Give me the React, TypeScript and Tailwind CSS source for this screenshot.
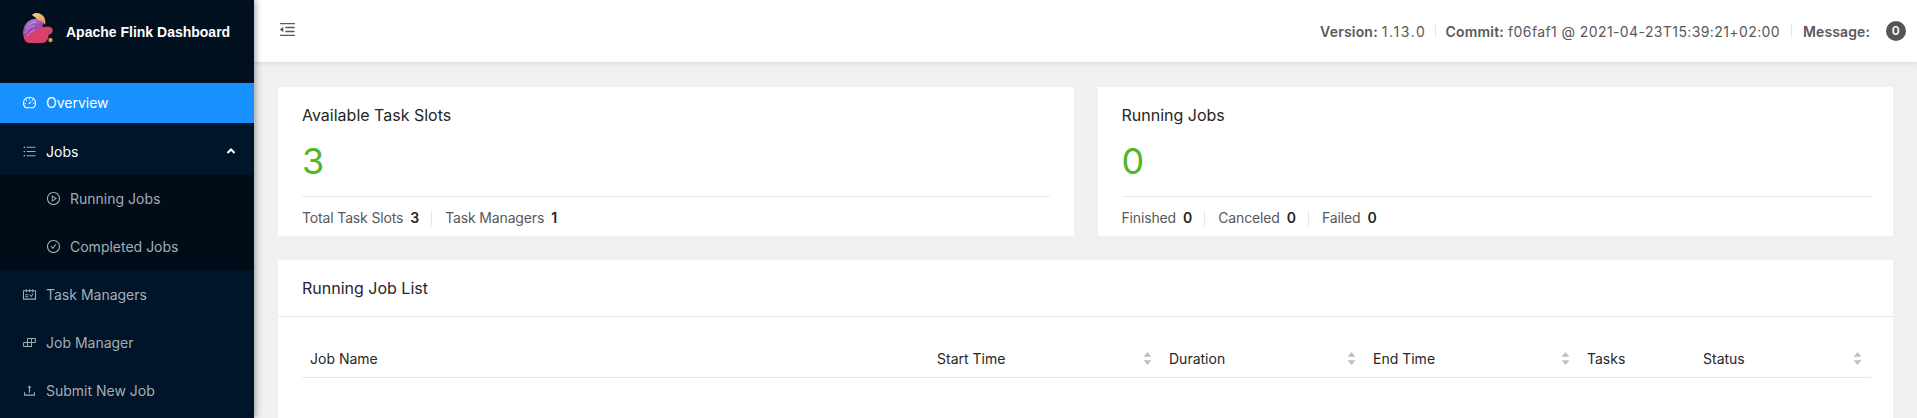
import {
  AiOutlineBuild,
  AiOutlineCheckCircle,
  AiOutlineDashboard,
  AiOutlineMenuFold,
  AiOutlinePlayCircle,
  AiOutlineSchedule,
  AiOutlineUnorderedList,
  AiOutlineUpload,
  AiFillCaretUp,
  AiFillCaretDown,
} from "react-icons/ai";

function Logo() {
  return (
    <svg width="32" height="32" viewBox="0 0 32 32" className="shrink-0">
      <defs>
        <linearGradient id="tail" x1="0" y1="0" x2="0.4" y2="1">
          <stop offset="0" stopColor="#c98ad8" />
          <stop offset="0.55" stopColor="#8f4fb8" />
          <stop offset="1" stopColor="#c9457f" />
        </linearGradient>
        <linearGradient id="crest" x1="0" y1="0" x2="1" y2="1">
          <stop offset="0" stopColor="#f9d98a" />
          <stop offset="1" stopColor="#e8874a" />
        </linearGradient>
      </defs>
      <path d="M1 22C1 14 5 8 12 7c4-1 8 0 10 3l-3 8-9 8c-3 1-8 1-9-4z" fill="url(#tail)" />
      <path d="M10 3c3-3 8-2 10 0 3 2 4 6 3 10-2-3-4-5-7-5-1-2-4-3-6-5z" fill="url(#crest)" />
      <path d="M4 17c2-4 6-7 10-7M3 21c2-4 6-7 10-7M5 24c2-3 5-5 8-6" stroke="#e2b4ee" strokeWidth="0.7" fill="none" />
      <path d="M1.500 24c4 0 8-1 12-5 3-3 6-5 9-4 2-1 7-1 8 2 1 3-1 5-4 6 0 4-2 8-6 8H7c-3 0-5-3-5.500-7z" fill="#d9416b" />
      <circle cx="28.500" cy="28" r="2.200" fill="#e39a2d" />
    </svg>
  );
}

function SortIcon() {
  return (
    <span className="flex flex-col text-[#bfbfbf] text-[11px] leading-none">
      <AiFillCaretUp className="-mb-[3px]" />
      <AiFillCaretDown />
    </span>
  );
}

function Stat({ label, value, last }: { label: string; value: string; last?: boolean }) {
  return (
    <div className={`flex items-center h-4 ${last ? "" : "mr-[13px] pr-3 border-r border-[#e8e8e8]"}`}>
      <span className="text-[#595959] tracking-[-0.15px]">{label}</span>
      <span className="ml-[7px] font-semibold text-[#262626]">{value}</span>
    </div>
  );
}

function StatCard({
  title,
  count,
  stats,
  className,
}: {
  title: string;
  count: string;
  stats: { label: string; value: string }[];
  className?: string;
}) {
  return (
    <div className={`h-[149px] bg-white pl-6 pt-[17px] ${className}`}>
      <div className="text-[16px] leading-[22px] text-[#262626]">{title}</div>
      <div className="mt-[12px] text-[36px] leading-[46px] text-[#4fb828]">{count}</div>
      <div className="mt-[12px] border-t border-[#e8e8e8] pt-[13px] flex text-[14px] leading-[20px]">
        {stats.map((s, i) => (
          <Stat key={s.label} label={s.label} value={s.value} last={i === stats.length - 1} />
        ))}
      </div>
    </div>
  );
}

const columns = [
  { name: "Job Name", width: "w-[627px]", sort: false },
  { name: "Start Time", width: "w-[232px]", sort: true },
  { name: "Duration", width: "w-[204px]", sort: true },
  { name: "End Time", width: "w-[214px]", sort: true },
  { name: "Tasks", width: "w-[116px]", sort: false },
  { name: "Status", width: "w-[176px]", sort: true },
];

export default function App() {
  return (
    <div className="flex h-screen overflow-hidden bg-[#f0f0f0] font-['Inter',sans-serif] text-[14px]">
      {/* SIDEBAR */}
      <aside className="w-[254px] shrink-0 bg-[#001529] shadow-[2px_0_6px_rgba(0,21,41,0.35)] z-10">
        <div className="h-[83px] bg-[#00101f] flex items-start pl-[22px] pt-[12px]">
          <Logo />
          <span className="ml-[12px] mt-[10px] font-['Liberation_Sans',sans-serif] font-bold text-[14px] leading-[20px] text-white">
            Apache Flink Dashboard
          </span>
        </div>
        <div className="h-10 pb-px bg-[#1890ff] flex items-center pl-[22px] text-white">
          <AiOutlineDashboard className="text-[15px] mr-[9px]" />
          Overview
        </div>
        <div className="h-10 mt-2 flex items-center pl-[22px] pr-[18px] text-white">
          <AiOutlineUnorderedList className="text-[15px] mr-[9px] text-[#a6adb4]" />
          <span className="flex-1">Jobs</span>
          <svg width="10" height="10" viewBox="0 0 10 10" fill="none" stroke="currentColor" strokeWidth="2">
            <path d="M1.500 7 5 3.500 8.500 7" />
          </svg>
        </div>
        <div className="mt-1 h-[95px] bg-[#000c17] text-[#a6adb4]">
          <div className="h-[47px] flex items-center pl-[46px]">
            <AiOutlinePlayCircle className="text-[15px] mr-[9px]" />
            Running Jobs
          </div>
          <div className="h-[48px] flex items-center pl-[46px]">
            <AiOutlineCheckCircle className="text-[15px] mr-[9px]" />
            Completed Jobs
          </div>
        </div>
        <div className="text-[#a6adb4]">
          <div className="h-[48px] flex items-center pl-[22px]">
            <AiOutlineSchedule className="text-[15px] mr-[9px]" />
            Task Managers
          </div>
          <div className="h-[48px] flex items-center pl-[22px]">
            <AiOutlineBuild className="text-[15px] mr-[9px]" />
            Job Manager
          </div>
          <div className="h-[48px] flex items-center pl-[22px]">
            <AiOutlineUpload className="text-[15px] mr-[9px]" />
            Submit New Job
          </div>
        </div>
      </aside>

      <div className="flex-1 min-w-0">
        {/* HEADER */}
        <header className="h-[62px] bg-white shadow-[0_1px_4px_rgba(0,21,41,0.12)] flex items-center pl-[24px] pr-[11px] text-[#595959]">
          <AiOutlineMenuFold className="text-[19px] -mt-[3px]" />
          <div className="ml-auto flex items-center tracking-[0.4px]">
            <b className="font-semibold tracking-[0.2px]">Version:</b>
            <span className="ml-[4px] tracking-[1.6px]">1.13.0</span>
            <span className="mx-[9px] h-[14px] w-px bg-[#e8e8e8]" />
            <b className="font-semibold tracking-[0.2px]">Commit:</b>
            <span className="ml-[4px]">f06faf1 @ 2021-04-23T15:39:21+02:00</span>
            <span className="mx-[11px] h-[14px] w-px bg-[#e8e8e8]" />
            <b className="font-semibold tracking-[0.1px]">Message:</b>
            <span className="ml-4 size-5 rounded-full bg-[#555555] text-white text-[12px] font-semibold flex items-center justify-center">
              0
            </span>
          </div>
        </header>

        {/* CONTENT */}
        <main className="px-6 pt-[25px]">
          <div className="grid grid-cols-2 gap-6">
            <StatCard
              title="Available Task Slots"
              count="3"
              className="pr-6"
              stats={[
                { label: "Total Task Slots", value: "3" },
                { label: "Task Managers", value: "1" },
              ]}
            />
            <StatCard
              title="Running Jobs"
              count="0"
              className="pr-[22px]"
              stats={[
                { label: "Finished", value: "0" },
                { label: "Canceled", value: "0" },
                { label: "Failed", value: "0" },
              ]}
            />
          </div>

          <div className="mt-6 bg-white h-[200px]">
            <div className="h-[57px] border-b border-[#e8e8e8] px-6 flex items-center text-[16px] text-[#262626]">
              Running Job List
            </div>
            <div className="pl-6 pr-[22px] pt-[23px]">
              <table className="w-full table-fixed border-b border-[#e8e8e8]">
                <thead>
                  <tr>
                    {columns.map((col) => (
                      <th key={col.name} className={`${col.width} h-[36px] p-2 font-normal text-left text-[#262626]`}>
                        <div className="flex items-center justify-between">
                          {col.name}
                          {col.sort && <SortIcon />}
                        </div>
                      </th>
                    ))}
                  </tr>
                </thead>
              </table>
            </div>
          </div>
        </main>
      </div>
    </div>
  );
}
